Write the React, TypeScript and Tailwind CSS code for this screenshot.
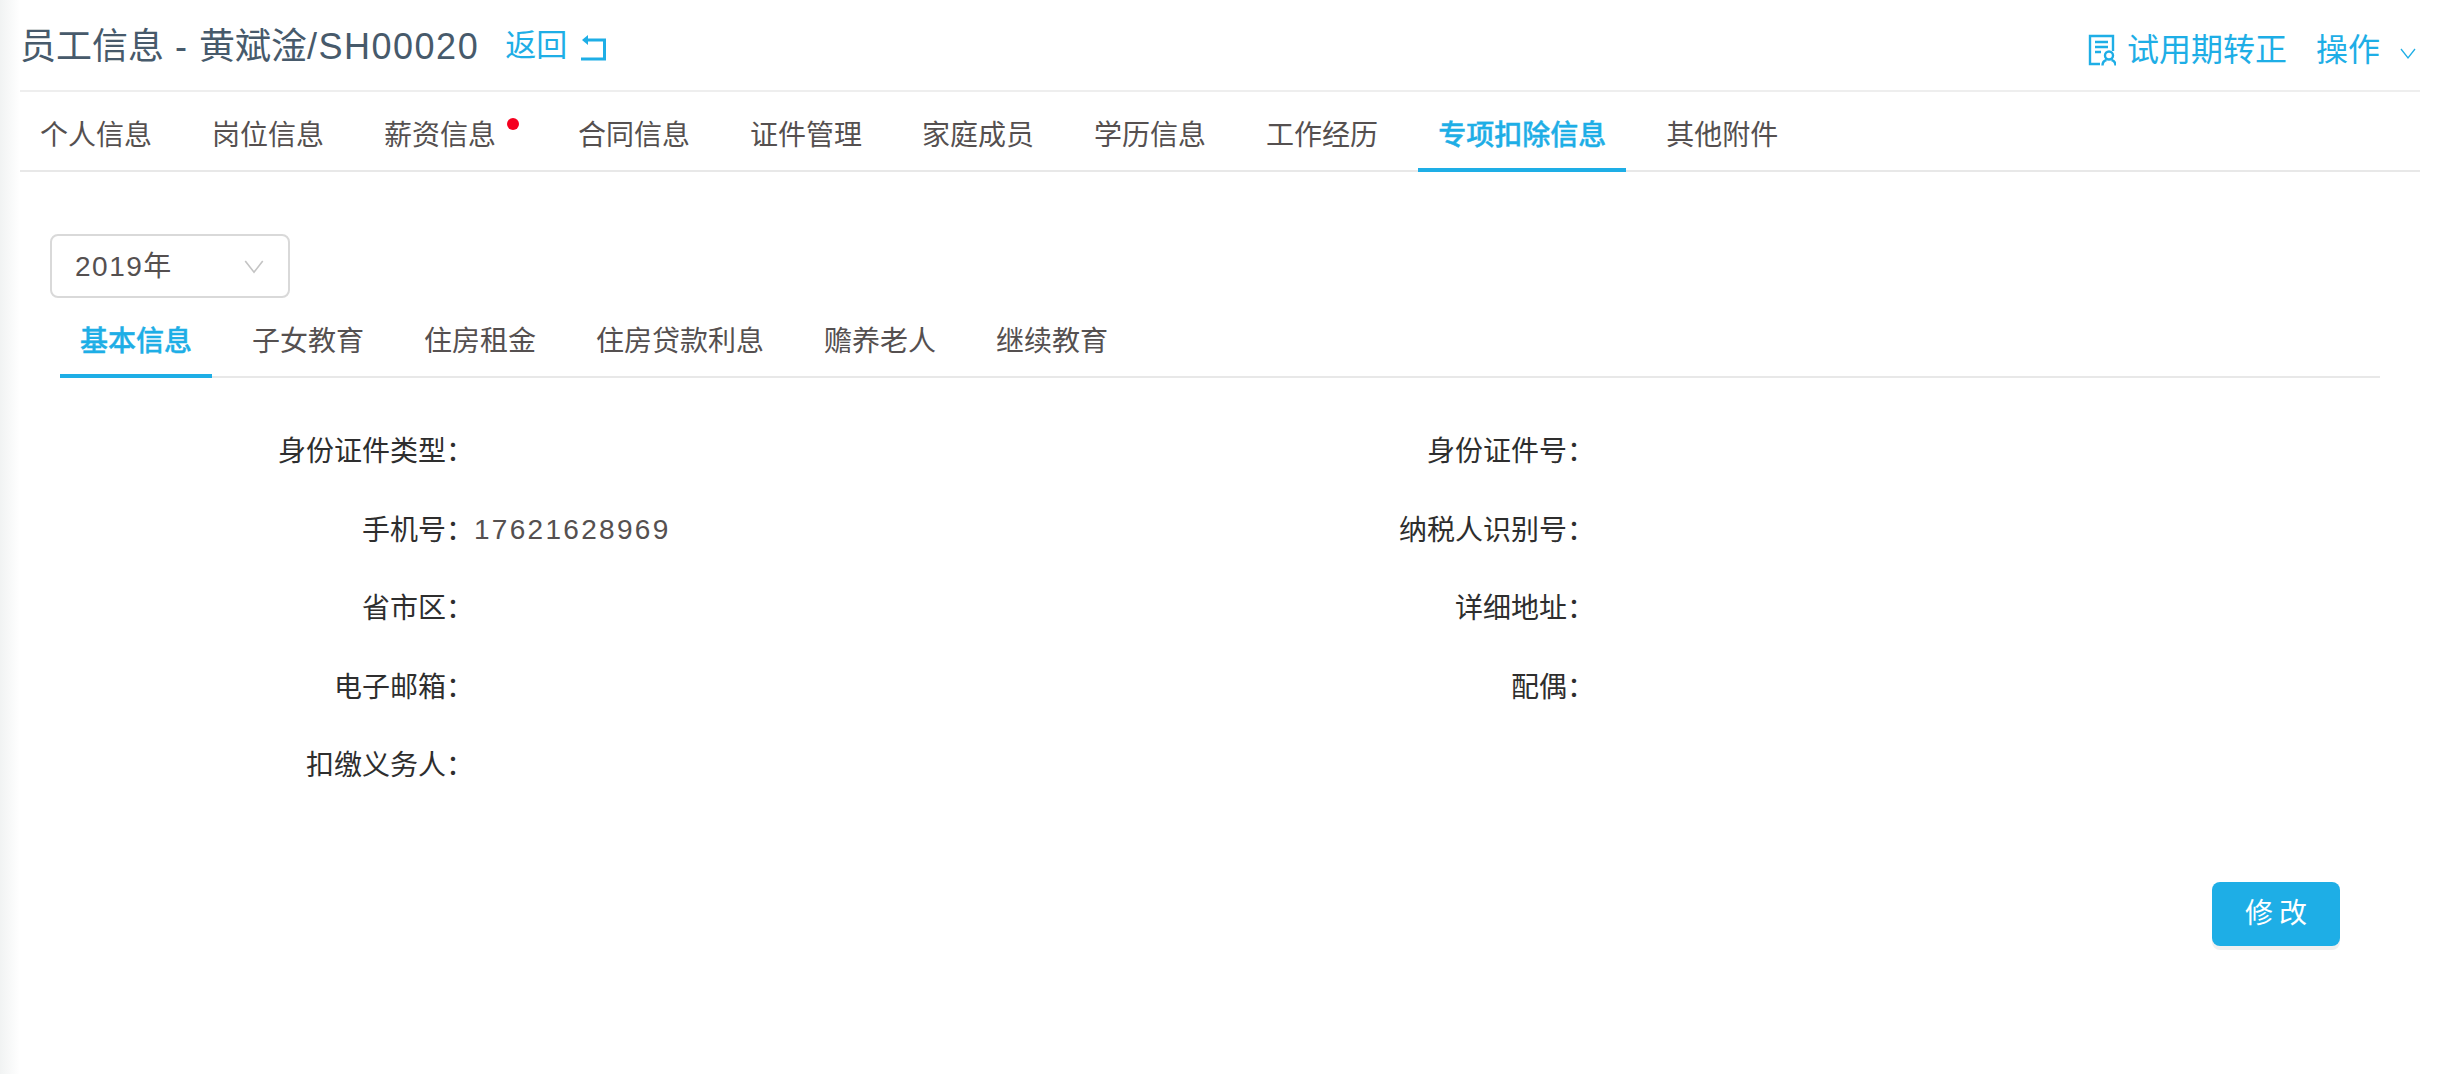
import React from "react";

const mainTabs = ["个人信息", "岗位信息", "薪资信息", "合同信息", "证件管理", "家庭成员", "学历信息", "工作经历", "专项扣除信息", "其他附件"];
const subTabs = ["基本信息", "子女教育", "住房租金", "住房贷款利息", "赡养老人", "继续教育"];
const rows: [string, string, string][] = [
  ["身份证件类型", "", "身份证件号"],
  ["手机号", "17621628969", "纳税人识别号"],
  ["省市区", "", "详细地址"],
  ["电子邮箱", "", "配偶"],
  ["扣缴义务人", "", ""],
];

function ReturnIcon() {
  return (
    <svg width="26" height="28" viewBox="0 0 26 28" fill="none" stroke="#1eaee6" strokeWidth="3">
      <path d="M4 7h19.500v19H0" />
      <path d="M1 7l6-5v10z" fill="#1eaee6" stroke="none" />
    </svg>
  );
}

function ProbationIcon() {
  return (
    <svg width="28" height="32" viewBox="0 0 28 32" fill="none" stroke="#1eaee6" strokeWidth="2.400">
      <path d="M12 30H2V2h23v15" />
      <path d="M7 8h13M7 13h13M7 18h6" />
      <circle cx="21" cy="21.500" r="4" />
      <path d="M14.500 31.500c0-3 2-5 4-5.500M27.500 31.500c0-3-2-5-4-5.500" />
    </svg>
  );
}

function Chevron({ color, size }: { color: string; size: number }) {
  return (
    <svg width={size} height={size} viewBox="0 0 16 16" fill="none" stroke={color} strokeWidth="1.3">
      <path d="M1 4l7 9 7-9" />
    </svg>
  );
}

function Tabs({ items, active }: { items: string[]; active: string }) {
  return (
    <ul className="flex gap-[20px]">
      {items.map((t) => (
        <li
          key={t}
          className={`relative h-[80px] -mb-[2px] pt-[12px] px-[20px] border-b-[4px] flex items-center text-[28px] ${
            t === active ? "border-[#1eaee6] text-[#1eaee6] font-medium [-webkit-text-stroke:0.4px_#1eaee6]" : "border-transparent text-[#555050]"
          } ${t === "薪资信息" ? "mr-[22px]" : ""}`}
        >
          {t}
          {t === "薪资信息" && <span className="absolute right-[-3px] top-[26px] w-[12px] h-[12px] rounded-full bg-[#f5001f]" />}
        </li>
      ))}
    </ul>
  );
}

function Field({ label, value }: { label: string; value?: string }) {
  return (
    <div className="flex items-center h-[78.500px]">
      <span className="w-[424px] text-right text-[28px] text-[#2e2e2e] whitespace-pre">{label ? `${label}：` : ""}</span>
      {value && <span className="text-[28px] leading-[40px] mb-[2px] text-[#555050] tracking-[2.300px]">{value}</span>}
    </div>
  );
}

export default function App() {
  return (
    <div className="flex min-h-[1074px] bg-white font-['Liberation_Sans','Noto_Sans_CJK_SC',sans-serif]">
      <div className="w-[20px] shrink-0 bg-gradient-to-r from-[#f1f3f3] to-white" />
      <div className="w-[2400px]">
        <header className="h-[92px] border-b-2 border-[#eeeeee] flex items-center justify-between">
          <div className="flex items-center mt-[3px]">
            <h1 className="text-[36px] text-[#475a6b]">
              员工信息<span className="tracking-[1px]"> - </span>黄斌淦<span className="tracking-[1.500px]">/SH00020</span>
            </h1>
            <span className="ml-[26px] text-[31px] text-[#1eaee6]">返回</span>
            <span className="ml-[14px]"><ReturnIcon /></span>
          </div>
          <div className="flex items-center mt-[9px] text-[32px] text-[#1eaee6]">
            <ProbationIcon />
            <span className="ml-[11px]">试用期转正</span>
            <span className="ml-[29px]">操作</span>
            <span className="ml-[20px] mr-[4px] mt-[6px]"><Chevron color="#1eaee6" size={16} /></span>
          </div>
        </header>
        <nav className="border-b-2 border-[#e8e8e8] h-[80px]">
          <Tabs items={mainTabs} active="专项扣除信息" />
        </nav>

        <div className="pl-[30px] pt-[62px] pr-[40px]">
          <div className="w-[240px] h-[64px] border-2 border-[#d9d9d9] rounded-[8px] flex items-center justify-between pl-[23px] pr-[24px] text-[28px] text-[#555050]">
            <span className="tracking-[1.500px] pt-[2px]">2019年</span>
            <Chevron color="#c4c4c4" size={20} />
          </div>

          <div className="ml-[10px] border-b-2 border-[#e8e8e8] h-[80px]">
            <Tabs items={subTabs} active="基本信息" />
          </div>

          <div className="grid grid-cols-[1121px_1fr] mt-[35px]">
            {rows.map(([left, value, right]) => (
              <React.Fragment key={left}>
                <Field label={left} value={value} />
                <Field label={right} />
              </React.Fragment>
            ))}
          </div>

          <div className="flex justify-end mt-[76px] pr-[40px]">
            <button className="w-[128px] h-[64px] pl-[6px] rounded-[8px] bg-[#1eaee6] text-white text-[28px] tracking-[6px] shadow-[0_4px_0_#f0f0f0]">
              修改
            </button>
          </div>
        </div>
      </div>
    </div>
  );
}
